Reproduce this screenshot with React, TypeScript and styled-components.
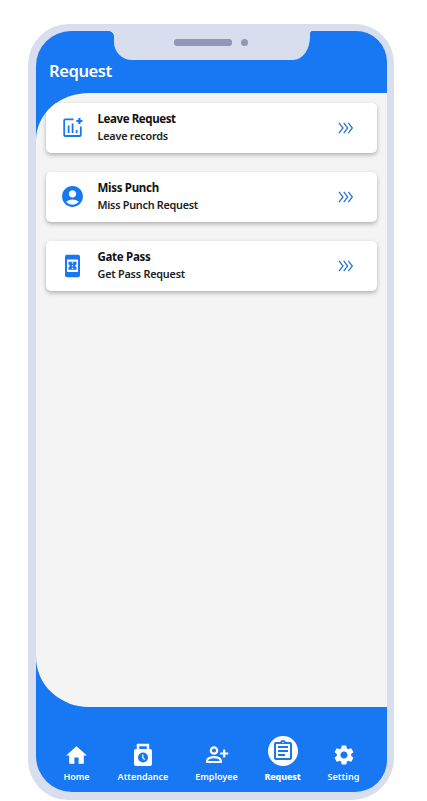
import React from "react";
import styled, { createGlobalStyle } from "styled-components";
import { MdAccountCircle, MdHome, MdOutlineAssignment, MdSettings } from "react-icons/md";

const blue = "#1877f2";
const frame = "#d8deee";
const font = '"Noto Sans", "Open Sans", sans-serif';

const GlobalStyle = createGlobalStyle`
  * { box-sizing: border-box; }
  body { margin: 0; background: #fff; font-family: ${font}; overflow: hidden; }
  svg { display: block; flex: none; }
`;

const Page = styled.main`
  width: 427px;
  height: 801px;
  padding: 24px 0 0 28px;
`;

const Phone = styled.div`
  position: relative;
  width: 366px;
  height: 776px;
  padding: 7px 7px 8px 8px;
  background: ${frame};
  border-radius: 41px 39px 42px 40px;
`;

const Screen = styled.div`
  display: flex;
  flex-direction: column;
  height: 100%;
  background: ${blue};
  border-radius: 35px 31px 32px 36px;
  overflow: hidden;
`;

const Notch = styled.div`
  position: absolute;
  top: 6px;
  left: 86px;
  width: 196px;
  height: 30px;
  display: flex;
  align-items: flex-start;
  padding: 9px 0 0 60px;
  gap: 9px;
  background: ${frame};
  border-radius: 0 0 17px 18px / 0 0 23px 18px;
  &::before, &::after {
    content: "";
    position: absolute;
    top: 1px;
    width: 5px;
    height: 5px;
  }
  &::before {
    left: -5px;
    background: radial-gradient(circle at 0 100%, transparent 4.5px, ${frame} 5px);
  }
  &::after {
    right: -2px;
    width: 2px;
    height: 2px;
    background: radial-gradient(circle at 100% 100%, transparent 1.5px, ${frame} 2px);
  }
`;

const Speaker = styled.span`
  width: 58px;
  height: 7px;
  border-radius: 3px;
  background: #9296b7;
`;

const Camera = styled.span`
  width: 7px;
  height: 7px;
  border-radius: 50%;
  background: #9296b7;
`;

const Header = styled.header`
  flex: none;
  height: 62px;
  padding: 29px 0 0 13px;
`;

const Title = styled.h1`
  margin: 0;
  color: #fff;
  font-size: 16.5px;
  line-height: 22px;
  font-weight: 600;
  letter-spacing: -0.4px;
`;

const Content = styled.section`
  flex: 1;
  display: flex;
  flex-direction: column;
  gap: 19px;
  padding: 9.6px 10px 0;
  background: #f4f4f4;
  border-radius: 53px 0 0 53px / 47px 0 0 50px;
  overflow: hidden;
`;

const Card = styled.article`
  flex: none;
  display: flex;
  align-items: center;
  height: 50px;
  padding: 0 23px 0 15px;
  color: ${blue};
  background: #fff;
  border-radius: 5px;
  box-shadow: 0 2px 4px rgba(0, 0, 0, 0.28);
`;

const IconSlot = styled.div`
  display: flex;
  align-items: center;
  justify-content: center;
  width: 23px;
`;

const CardText = styled.div`
  flex: 1;
  margin-left: 13.5px;
`;

const CardTitle = styled.h2<{ $spacing: number }>`
  margin: 0;
  color: #111;
  font-size: 11.5px;
  line-height: 16px;
  font-weight: 700;
  letter-spacing: ${(p) => p.$spacing}px;
`;

const CardNote = styled.p<{ $spacing: number }>`
  margin: 0;
  color: #202020;
  font-size: 10.8px;
  line-height: 17px;
  font-weight: 600;
  letter-spacing: ${(p) => p.$spacing}px;
`;

const Nav = styled.nav`
  flex: none;
  display: flex;
  height: 85px;
  padding: 29px 14px 0 13px;
`;

const NavItem = styled.div<{ $width: number }>`
  width: ${(p) => p.$width}px;
  display: flex;
  flex-direction: column;
  align-items: center;
  color: #fff;
`;

const NavIcon = styled.div<{ $active?: boolean }>`
  display: flex;
  align-items: center;
  justify-content: center;
  width: 30px;
  height: 30px;
  padding-top: ${(p) => (p.$active ? 0 : 8)}px;
  border-radius: 50%;
  background: ${(p) => (p.$active ? "#fff" : "transparent")};
  color: ${(p) => (p.$active ? blue : "#fff")};
`;

const NavLabel = styled.span<{ $active?: boolean; $spacing: number }>`
  margin-top: 5px;
  font-size: 9px;
  line-height: 12px;
  font-weight: ${(p) => (p.$active ? 800 : 600)};
  letter-spacing: ${(p) => p.$spacing}px;
  white-space: nowrap;
`;

const Chevrons = () => (
  <svg width="16" height="12" viewBox="0 0 16 12" fill="none" stroke="#2874ce" strokeWidth="1.3">
    <path d="M1 .8 5 6 1 11.2M5.7 .8l4 5.2-4 5.2M10.3 .8l4 5.2-4 5.2" />
  </svg>
);

const ChartIcon = () => (
  <svg width="23" height="23" viewBox="0 0 23 23" fill="none" stroke={blue} strokeWidth="1.8">
    <path d="M12.500 3.400H4.200a1 1 0 0 0-1 1V19a1 1 0 0 0 1 1h14.600a1 1 0 0 0 1-1v-8.500" />
    <path d="M7.600 9.500V17M11.600 7.500V17M15.600 14v3" />
    <path d="M18.400 2v6M15.400 5h6" strokeWidth="2.200" />
  </svg>
);

const PassIcon = () => (
  <svg width="23" height="24" viewBox="0 0 23 24" fill={blue}>
    <path
      fillRule="evenodd"
      d="M6 .7h11a2 2 0 0 1 2 2v18.600a2 2 0 0 1-2 2H6a2 2 0 0 1-2-2V2.700a2 2 0 0 1 2-2ZM6 5.500v12.500h11V5.500Z"
    />
    <path d="M7.500 7.800h8v2.800a1.200 1.200 0 0 0 0 2.400v2.800h-8V13a1.200 1.200 0 0 0 0-2.400Z" />
    <path d="M11.500 8.300v7" stroke="#fff" strokeWidth="1.200" strokeDasharray="1.200 1.500" />
  </svg>
);

const AttendanceIcon = () => (
  <svg width="20" height="24" viewBox="0 0 20 24" fill="none">
    <path d="M5 7V2h10v5" stroke="#fff" strokeWidth="2.5" />
    <rect x="1" y="6" width="18" height="17" rx="2" fill="#fff" />
    <circle cx="10" cy="14.5" r="5" fill={blue} />
    <path d="M9.8 11.5v3.2l2 2" stroke="#fff" strokeWidth="1.2" />
  </svg>
);

const EmployeeIcon = () => (
  <svg width="24" height="24" viewBox="0 0 24 24" fill="none" stroke="#fff" strokeWidth="2.2">
    <circle cx="9" cy="7.500" r="3.200" />
    <path d="M2.200 19v-1.600c0-1.900 3.400-3.200 6.800-3.200s6.800 1.300 6.800 3.200V19ZM19.200 6.500v8M15.200 10.500h8" />
  </svg>
);

const cards = [
  { title: "Leave Request", note: "Leave records", icon: <ChartIcon />, ts: -0.4, ns: -0.2 },
  { title: "Miss Punch", note: "Miss Punch Request", icon: <MdAccountCircle size={25} />, ts: -0.3, ns: -0.25 },
  { title: "Gate Pass", note: "Get Pass Request", icon: <PassIcon />, ts: -0.3, ns: -0.2 },
];

const tabs = [
  { label: "Home", icon: <MdHome size={25} />, width: 55, ls: -0.05 },
  { label: "Attendance", icon: <AttendanceIcon />, width: 78, ls: 0 },
  { label: "Employee", icon: <EmployeeIcon />, width: 69, ls: 0 },
  { label: "Request", icon: <MdOutlineAssignment size={24} />, width: 63, ls: -0.15, active: true },
  { label: "Setting", icon: <MdSettings size={24} />, width: 59, ls: 0.1 },
];

export default function App() {
  return (
    <Page>
      <GlobalStyle />
      <Phone>
        <Screen>
          <Header>
            <Title>Request</Title>
          </Header>
          <Content>
            {cards.map((c) => (
              <Card key={c.title}>
                <IconSlot>{c.icon}</IconSlot>
                <CardText>
                  <CardTitle $spacing={c.ts}>{c.title}</CardTitle>
                  <CardNote $spacing={c.ns}>{c.note}</CardNote>
                </CardText>
                <Chevrons />
              </Card>
            ))}
          </Content>
          <Nav>
            {tabs.map((t) => (
              <NavItem key={t.label} $width={t.width}>
                <NavIcon $active={t.active}>{t.icon}</NavIcon>
                <NavLabel $active={t.active} $spacing={t.ls}>{t.label}</NavLabel>
              </NavItem>
            ))}
          </Nav>
        </Screen>
        <Notch>
          <Speaker />
          <Camera />
        </Notch>
      </Phone>
    </Page>
  );
}
